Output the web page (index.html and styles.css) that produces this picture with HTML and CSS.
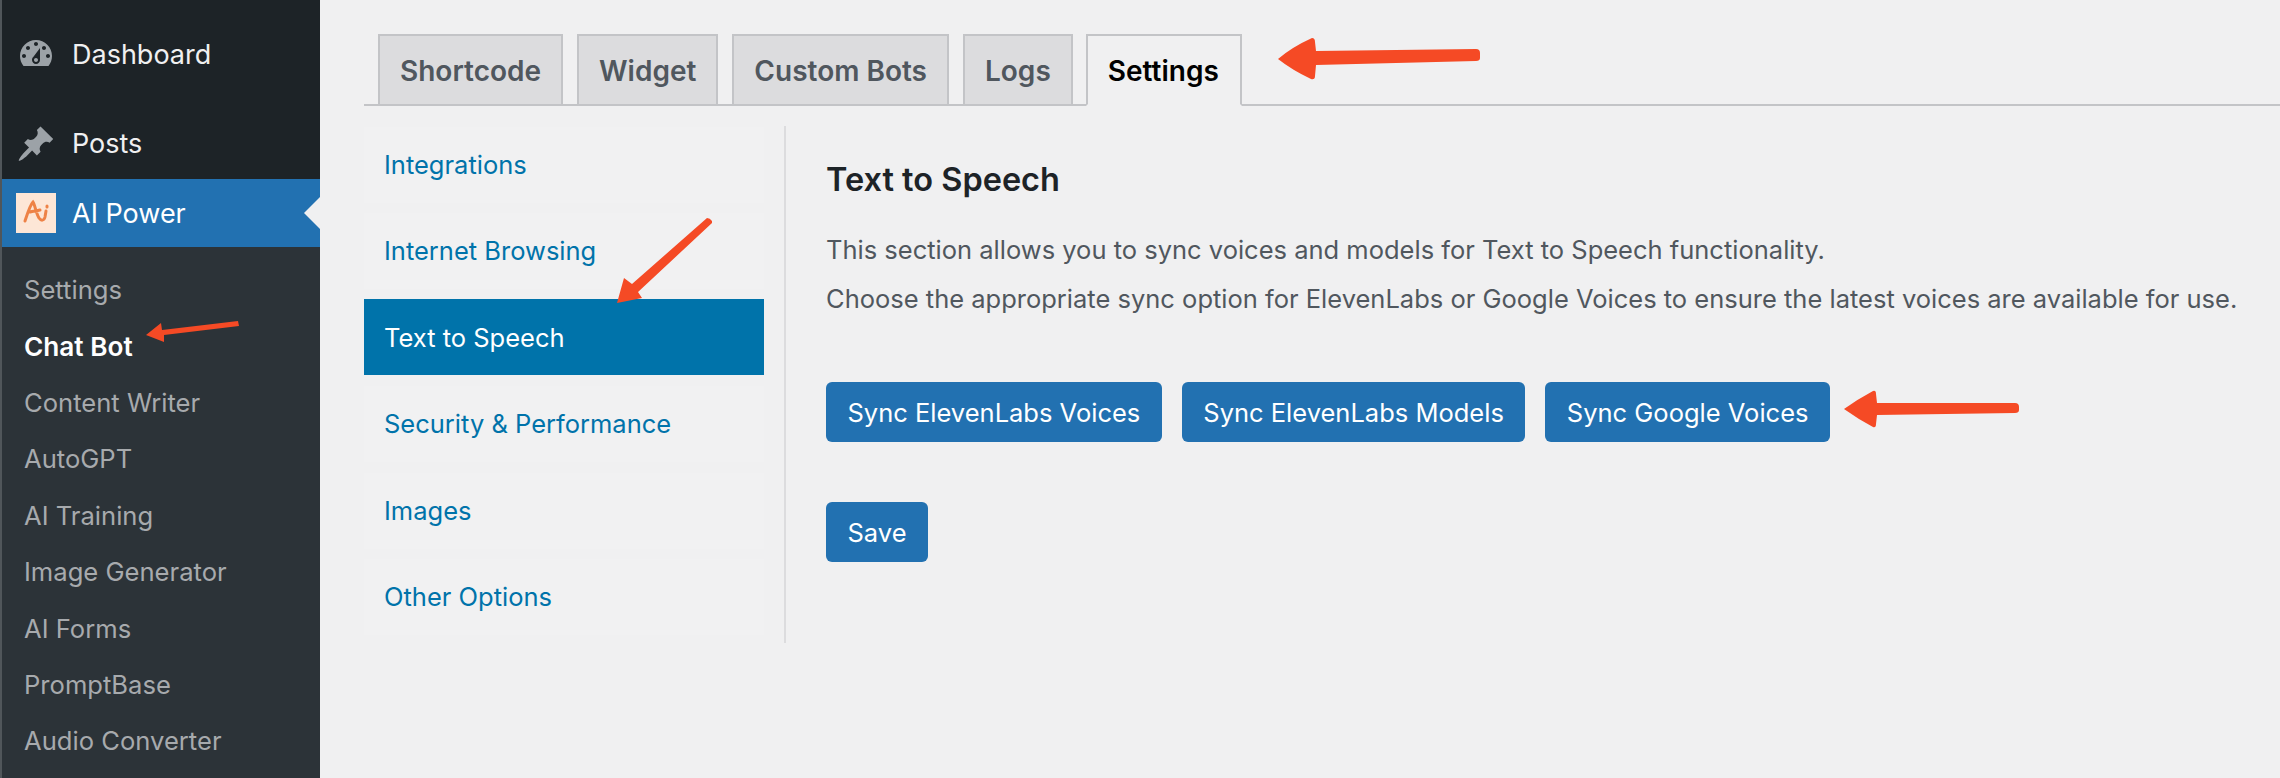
FILE: index.html
```html
<!DOCTYPE html>
<html lang="en">
  <head>
    <meta charset="UTF-8" />
    <title>AI Power Settings</title>
    <link rel="stylesheet" href="styles.css">
  </head>
  <body>
    <aside class="sidebar">
      <div class="menu-top">
        <a class="menu-item menu-dashboard">
          <svg class="menu-icon" viewBox="0 0 20 20"><path fill-rule="evenodd" d="M3.76 16h12.48c1.1-1.37 1.76-3.11 1.76-5 0-4.42-3.58-8-8-8s-8 3.58-8 8c0 1.89.66 3.63 1.76 5zM10 4c.55 0 1 .45 1 1s-.45 1-1 1-1-.45-1-1 .45-1 1-1zM6 6c.55 0 1 .45 1 1s-.45 1-1 1-1-.45-1-1 .45-1 1-1zm8 0c.55 0 1 .45 1 1s-.45 1-1 1-1-.45-1-1 .45-1 1-1zm-5.37 5.55L12 7v6c0 1.1-.9 2-2 2s-2-.9-2-2c0-.57.24-1.08.63-1.45zM4 10c.55 0 1 .45 1 1s-.45 1-1 1-1-.45-1-1 .45-1 1-1zm12 0c.55 0 1 .45 1 1s-.45 1-1 1-1-.45-1-1 .45-1 1-1zm-5 3c0-.55-.45-1-1-1s-1 .45-1 1 .45 1 1 1 1-.45 1-1z"/></svg>
          Dashboard
        </a>
        <a class="menu-item menu-posts">
          <svg class="menu-icon" viewBox="0 0 20 20"><path d="M10.44 3.02l1.82-1.82 6.36 6.35-1.83 1.82c-1.05-.68-2.48-.57-3.41.36l-.75.75c-.92.93-1.04 2.35-.35 3.41l-1.83 1.82-2.41-2.41-2.8 2.79c-.42.42-3.38 2.71-3.8 2.29s1.86-3.39 2.28-3.81l2.79-2.79L4.1 9.36l1.83-1.82c1.05.69 2.48.57 3.4-.36l.75-.75c.93-.92 1.05-2.35.36-3.41z"/></svg>
          Posts
        </a>
        <a class="menu-item menu-current">
          <svg class="menu-logo" viewBox="0 0 40 40">
            <rect width="40" height="40" fill="#fde6d6"/>
            <path class="logo-mark" d="M9 28 C11 22 14 12 17 9 C19 12 20 20 23 25 C25 28 28 28 29 24 L30 18 M14 19 C17 18 20 18 24 17 M31 13 L31 14"/>
          </svg>
          AI Power
          <span class="menu-notch"></span>
        </a>
      </div>
      <ul class="submenu">
        <li>Settings</li>
        <li class="submenu-current">Chat Bot</li>
        <li>Content Writer</li>
        <li>AutoGPT</li>
        <li>AI Training</li>
        <li>Image Generator</li>
        <li>AI Forms</li>
        <li>PromptBase</li>
        <li>Audio Converter</li>
      </ul>
    </aside>

    <main class="main">
      <nav class="tabs">
        <a class="tab">Shortcode</a>
        <a class="tab">Widget</a>
        <a class="tab">Custom Bots</a>
        <a class="tab">Logs</a>
        <a class="tab tab-active">Settings</a>
      </nav>

      <div class="settings">
        <div class="side-col">
          <a class="side-link">Integrations</a>
          <a class="side-link">Internet Browsing</a>
          <a class="side-link side-active">Text to Speech</a>
          <a class="side-link">Security &amp; Performance</a>
          <a class="side-link">Images</a>
          <a class="side-link">Other Options</a>
        </div>

        <section class="panel">
          <h2>Text to Speech</h2>
          <p>This section allows you to sync voices and models for Text to Speech functionality.</p>
          <p>Choose the appropriate sync option for ElevenLabs or Google Voices to ensure the latest voices are available for use.</p>
          <div class="btn-row">
            <button class="btn">Sync ElevenLabs Voices</button>
            <button class="btn">Sync ElevenLabs Models</button>
            <button class="btn">Sync Google Voices</button>
          </div>
          <button class="btn btn-save">Save</button>
        </section>
      </div>
    </main>

    <!-- red arrows drawn over the screenshot -->
    <svg class="arrows" viewBox="0 0 2280 778">
      <path d="M1278 59 Q1292 47 1312 38 Q1315 38 1315 42 L1316 51 L1476 49 Q1480 49 1480 53 L1480 58 Q1480 61 1476 61 L1316 65 L1315 76 Q1315 80 1311 79 Q1292 70 1278 59 Z"/>
      <path d="M1844 409 Q1858 399 1873 391 Q1876 390 1876 394 L1877 403 L2015 403 Q2019 403 2019 407 L2019 410 Q2019 413 2015 413 L1877 415 L1876 424 Q1876 428 1873 427 Q1858 419 1844 409 Z"/>
      <path d="M146 335 L161 323 L162 330 L238 321 L239 326 L164 335 L164 342 Z"/>
      <path d="M617 303 L624 278 L632 284 L707 218 Q710 218 712 221 L712 223 L638 292 L642 298 Z"/>
    </svg>
  </body>
</html>
```

FILE: styles.css
```css
* {
  box-sizing: border-box;
}
html,
body {
  margin: 0;
  height: 778px;
  overflow: hidden;
}
body {
  position: relative;
  display: flex;
  background: #f0f0f1;
  font-family: Inter, "Liberation Sans", sans-serif;
  font-size: 25.5px;
  color: #50575e;
}

/* admin menu */
.sidebar {
  width: 320px;
  flex-shrink: 0;
  display: flex;
  flex-direction: column;
  background: #2c3338;
  border-left: 2px solid #50565a;
}
.menu-top {
  background: #1d2327;
}
.menu-item {
  display: flex;
  align-items: center;
  gap: 16px;
  padding-left: 14px;
  color: #f0f0f1;
  font-size: 27px;
}
.menu-dashboard {
  height: 108px;
}
.menu-posts {
  height: 71px;
}
.menu-current {
  position: relative;
  height: 68px;
  background: #2271b1;
  color: #fff;
}
.menu-icon {
  width: 40px;
  height: 40px;
  fill: #9ca2a7;
}
.menu-logo {
  width: 40px;
  height: 40px;
}
.logo-mark {
  fill: none;
  stroke: #ee8246;
  stroke-width: 3;
  stroke-linecap: round;
  filter: blur(0.5px);
}
.menu-notch {
  position: absolute;
  right: 0;
  top: 18px;
  border: 16px solid transparent;
  border-right-color: #f0f0f1;
  border-left-width: 0;
}
.submenu {
  list-style: none;
  margin: 0;
  padding: 15.2px 0 0 22px;
  color: #a7aaad;
  font-size: 25.6px;
}
.submenu li {
  height: 56.4px;
  line-height: 56px;
}
.submenu .submenu-current {
  color: #fff;
  font-size: 26.2px;
  font-weight: 600;
}

/* page */
.main {
  flex: 1;
  padding: 34px 0 0 44px;
}
.tabs {
  display: flex;
  gap: 14px;
  height: 72px;
  padding-left: 14px;
  border-bottom: 2px solid #c3c4c7;
}
.tab {
  height: 72px;
  padding: 0 20px;
  line-height: 70px;
  background: #dcdcde;
  border: 2px solid #c3c4c7;
  font-size: 28px;
  font-weight: 600;
  white-space: nowrap;
}
.tab-active {
  padding: 0 21px 0 20px;
  margin-left: -1px;
  background: #f0f0f1;
  border-bottom-color: #f0f0f1;
  color: #000;
}
.settings {
  display: flex;
  margin-top: 20px;
}
.side-col {
  width: 422px;
  height: 517px;
  padding: 1px 20px 0 0;
  border-right: 2px solid #dcdcde;
  display: flex;
  flex-direction: column;
  gap: 10.4px;
}
.side-link {
  height: 76px;
  line-height: 76px;
  padding-left: 20px;
  background: #f1f1f2;
  color: #0073aa;
}
.side-active {
  margin: -0.8px 0 0.8px;
  line-height: 77px;
  background: #0073aa;
  color: #fff;
}
.panel {
  padding-left: 40px;
}
.panel h2 {
  margin: 33px 0 33px;
  font-size: 32.5px;
  font-weight: 600;
  line-height: 42px;
  color: #1d2327;
}
.panel p {
  margin: 0 0 17px;
  line-height: 32px;
  white-space: nowrap;
}
.btn-row {
  display: flex;
  gap: 20px;
  margin: 67px 0 60px;
}
.btn {
  display: block;
  height: 60px;
  padding: 0 21.5px;
  border: none;
  border-radius: 6px;
  background: #2271b1;
  color: #fff;
  font-family: inherit;
  font-size: 25.5px;
  white-space: nowrap;
}

.arrows {
  position: absolute;
  left: 0;
  top: 0;
  width: 2280px;
  height: 778px;
  fill: #f54a25;
  pointer-events: none;
}
```
